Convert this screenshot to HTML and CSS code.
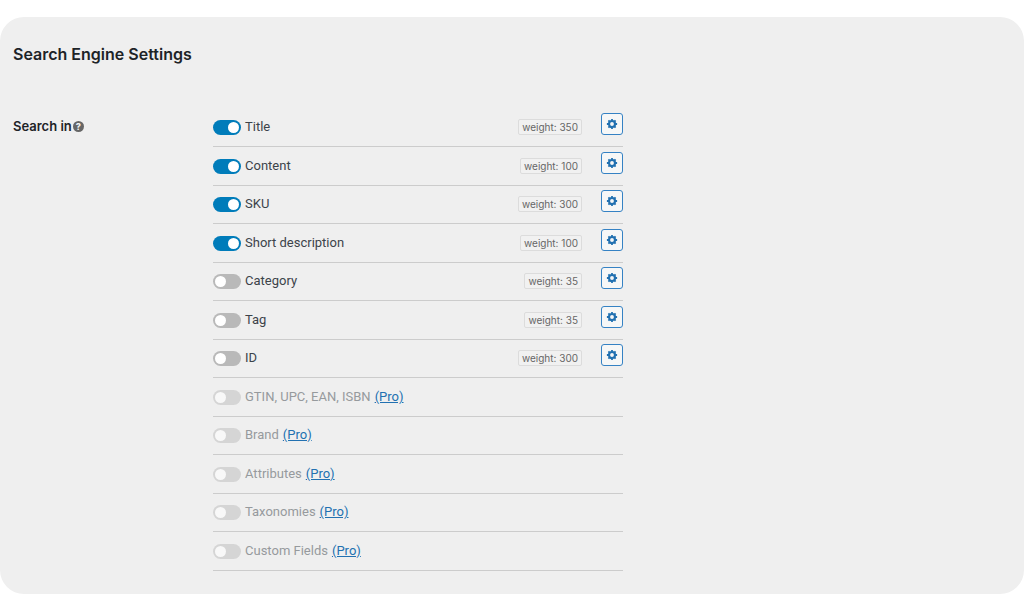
FILE: index.html
```html
<!DOCTYPE html>
<html lang="en">
<head>
    <meta charset="UTF-8">
    <meta name="viewport" content="width=device-width, initial-scale=1.0">
    <title>Search Engine Settings</title>
    <link rel="stylesheet" href="styles.css">
</head>
<body>
    <svg class="sprite" aria-hidden="true">
        <symbol id="gear" viewBox="0 0 20 20">
            <circle cx="10" cy="10" r="5" fill="none" stroke="currentColor" stroke-width="3.6"/>
            <path d="M10 1.5v3M10 15.500v3M1.500 10h3M15.500 10h3M4 4l2 2M14 14l2 2M4 16l2-2M14 6l2-2" fill="none" stroke="currentColor" stroke-width="3"/>
        </symbol>
    </svg>
    <main class="panel">
        <h1>Search Engine Settings</h1>
        <form class="setting">
            <h2 class="setting-name">Search in<button type="button" class="help" aria-label="Help">?</button></h2>
            <ul class="fields">
                <li class="field">
                    <input type="checkbox" class="toggle" id="f-title" checked>
                    <label for="f-title">Title</label>
                    <span class="weight">weight: 350</span>
                    <button type="button" class="config" aria-label="Configure Title"><svg><use href="#gear"/></svg></button>
                </li>
                <li class="field">
                    <input type="checkbox" class="toggle" id="f-content" checked>
                    <label for="f-content">Content</label>
                    <span class="weight">weight: 100</span>
                    <button type="button" class="config" aria-label="Configure Content"><svg><use href="#gear"/></svg></button>
                </li>
                <li class="field">
                    <input type="checkbox" class="toggle" id="f-sku" checked>
                    <label for="f-sku">SKU</label>
                    <span class="weight">weight: 300</span>
                    <button type="button" class="config" aria-label="Configure SKU"><svg><use href="#gear"/></svg></button>
                </li>
                <li class="field">
                    <input type="checkbox" class="toggle" id="f-short" checked>
                    <label for="f-short">Short description</label>
                    <span class="weight">weight: 100</span>
                    <button type="button" class="config" aria-label="Configure Short description"><svg><use href="#gear"/></svg></button>
                </li>
                <li class="field">
                    <input type="checkbox" class="toggle" id="f-category">
                    <label for="f-category">Category</label>
                    <span class="weight">weight: 35</span>
                    <button type="button" class="config" aria-label="Configure Category"><svg><use href="#gear"/></svg></button>
                </li>
                <li class="field">
                    <input type="checkbox" class="toggle" id="f-tag">
                    <label for="f-tag">Tag</label>
                    <span class="weight">weight: 35</span>
                    <button type="button" class="config" aria-label="Configure Tag"><svg><use href="#gear"/></svg></button>
                </li>
                <li class="field">
                    <input type="checkbox" class="toggle" id="f-id">
                    <label for="f-id">ID</label>
                    <span class="weight">weight: 300</span>
                    <button type="button" class="config" aria-label="Configure ID"><svg><use href="#gear"/></svg></button>
                </li>
                <li class="field pro">
                    <input type="checkbox" class="toggle" id="f-gtin" disabled>
                    <label for="f-gtin">GTIN, UPC, EAN, ISBN</label>
                    <a href="#pro">(Pro)</a>
                </li>
                <li class="field pro">
                    <input type="checkbox" class="toggle" id="f-brand" disabled>
                    <label for="f-brand">Brand</label>
                    <a href="#pro">(Pro)</a>
                </li>
                <li class="field pro">
                    <input type="checkbox" class="toggle" id="f-attributes" disabled>
                    <label for="f-attributes">Attributes</label>
                    <a href="#pro">(Pro)</a>
                </li>
                <li class="field pro">
                    <input type="checkbox" class="toggle" id="f-taxonomies" disabled>
                    <label for="f-taxonomies">Taxonomies</label>
                    <a href="#pro">(Pro)</a>
                </li>
                <li class="field pro">
                    <input type="checkbox" class="toggle" id="f-custom" disabled>
                    <label for="f-custom">Custom Fields</label>
                    <a href="#pro">(Pro)</a>
                </li>
            </ul>
        </form>
    </main>
</body>
</html>
```

FILE: styles.css
```css
* {
    box-sizing: border-box;
}

body {
    margin: 0;
    padding: 17px 0 20px;
    background: #fff;
    color: #3c434a;
    font-family: Roboto, sans-serif;
    font-size: 13px;
    line-height: 16px;
}

.sprite {
    display: none;
}

.panel {
    padding: 26px 13px 23px;
    background: #efefef;
    border-radius: 24px;
}

h1 {
    margin: 0 0 43px;
    color: #1d2327;
    font-family: Inter, sans-serif;
    font-size: 16px;
    font-weight: 600;
    line-height: 23px;
}

.setting {
    display: grid;
    grid-template-columns: 200px minmax(0, 410px);
}

.setting-name {
    display: flex;
    align-items: center;
    align-self: start;
    gap: 1px;
    margin: 9px 0 0;
    color: #1d2327;
    font-family: Inter, sans-serif;
    font-size: 13px;
    font-weight: 600;
}

.help {
    width: 11px;
    height: 11px;
    padding: 0;
    border: 0;
    border-radius: 50%;
    background: #666;
    color: #efefef;
    font-family: inherit;
    font-size: 9px;
    font-weight: 800;
    line-height: 11px;
}

.fields {
    margin: 0;
    padding: 0;
    list-style: none;
}

.field {
    display: flex;
    align-items: flex-end;
    height: 38px;
    padding-bottom: 11px;
    border-bottom: 1px solid #ccc;
}

.field:nth-child(even) {
    height: 39px;
}

/* Switches */
.toggle {
    flex: none;
    appearance: none;
    width: 28px;
    height: 15px;
    margin: 0 4px 0 0;
    padding: 2px;
    border-radius: 8px;
    background: #b9b9b9;
}

.toggle::before {
    content: '';
    display: block;
    width: 11px;
    height: 11px;
    border-radius: 50%;
    background: #fff;
}

.toggle:checked {
    background: #007cba;
}

.toggle:checked::before {
    margin-left: auto;
}

.weight {
    margin-left: auto;
    padding: 0 3px;
    border: 1px solid #dcdcdc;
    border-radius: 2px;
    background: #f1f1f1;
    color: #666;
    font-family: Inter, sans-serif;
    font-size: 10px;
    line-height: 14px;
}

.config {
    display: flex;
    align-items: center;
    justify-content: center;
    width: 22px;
    height: 22px;
    margin-left: 19px;
    padding: 0;
    border: 1px solid #3582c4;
    border-radius: 3px;
    background: #f6f7f7;
    color: #2271b1;
}

.config svg {
    width: 12px;
    height: 12px;
}

/* Fields of the paid version */
.pro .toggle {
    background: #d5d5d5;
}

.pro .toggle::before {
    background: #f8f8f8;
}

.pro label {
    color: #969a9d;
}

.pro a {
    margin-left: 4px;
    color: #2271b1;
}
```
